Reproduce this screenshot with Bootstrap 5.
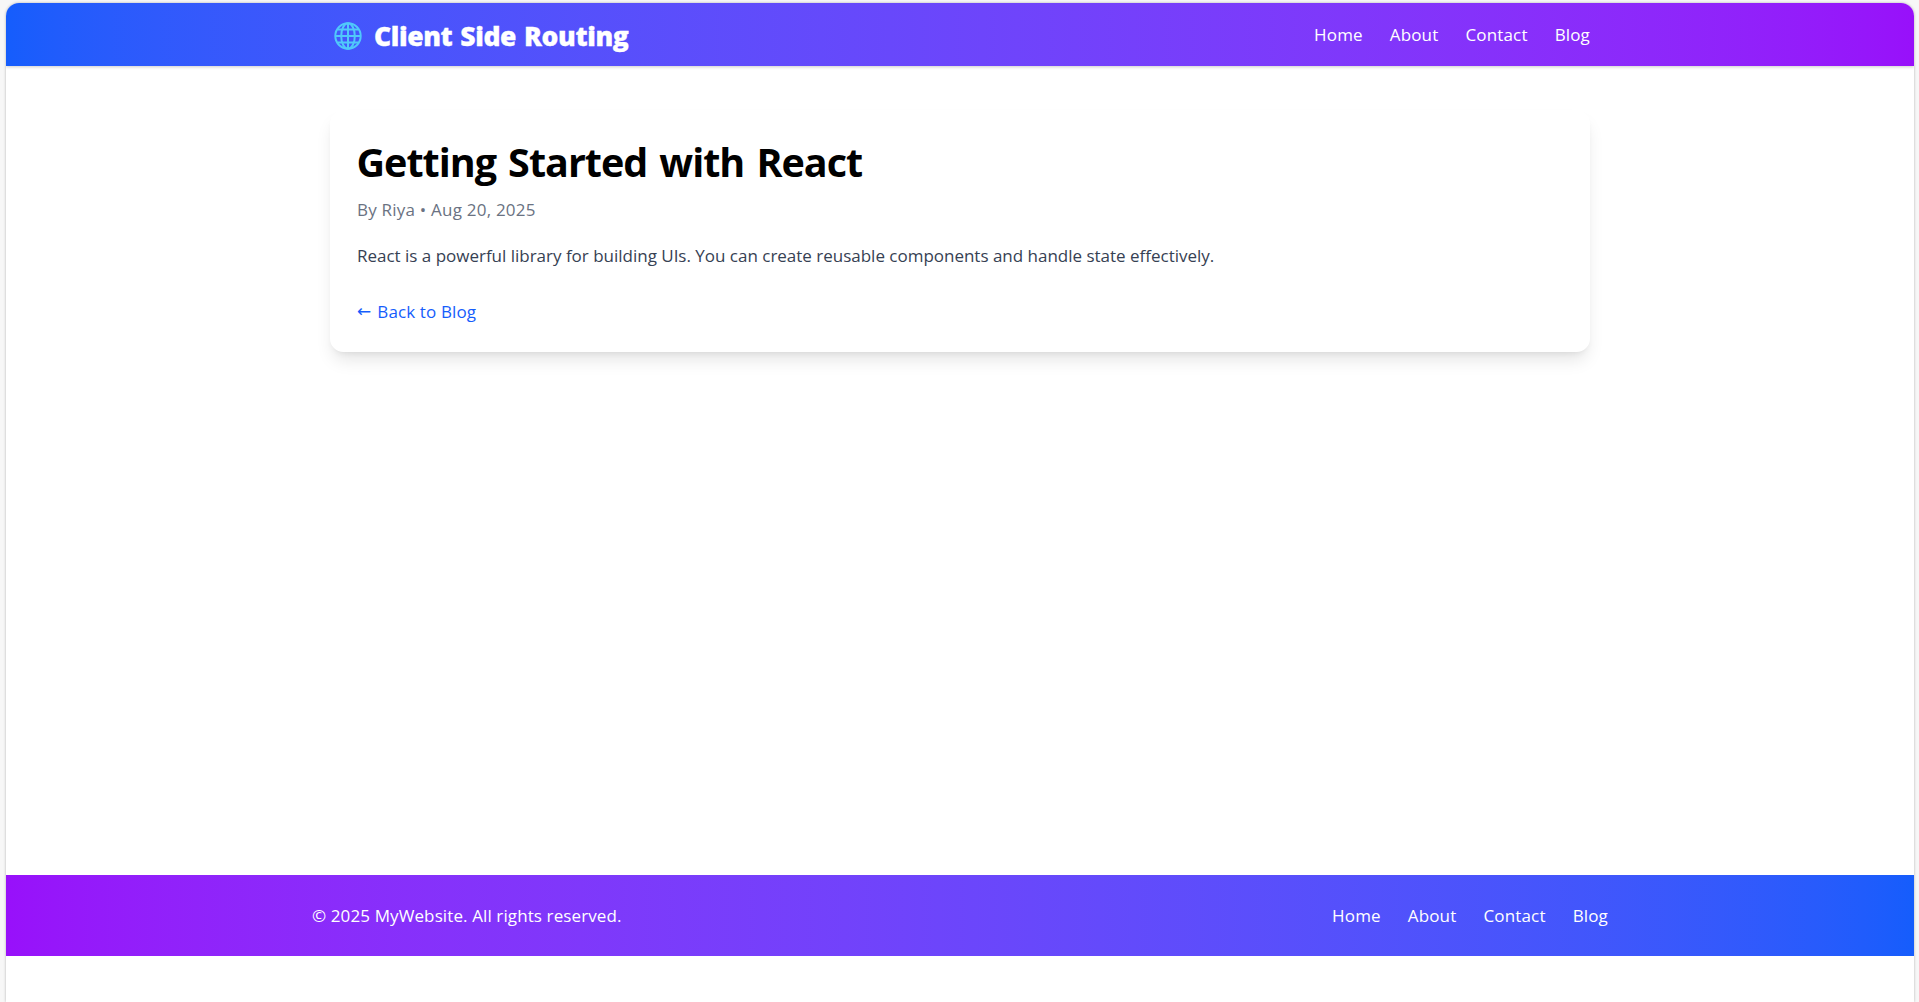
<!DOCTYPE html>
<html lang="en">
<head>
<meta charset="utf-8">
<meta name="viewport" content="width=device-width, initial-scale=1">
<title>Client Side Routing</title>
<link href="https://cdn.jsdelivr.net/npm/bootstrap@5.3.0/dist/css/bootstrap.min.css" rel="stylesheet">
<style>
body{background:#f7f7f7;font:17px/27px "Open Sans","Noto Sans",sans-serif;height:100vh;overflow:hidden;padding:3px 5px 0 6px}
.app-frame{height:999px;background:#fff;border-radius:13px 13px 0 0;box-shadow:0 0 3px rgba(0,0,0,.28);overflow:hidden}
.site-header{height:63px;background:linear-gradient(to right in oklab,#155dfc,#9810fa);box-shadow:0 1px 3px rgba(0,0,0,.2)}
.site-footer{height:81px;background:linear-gradient(to right in oklab,#9810fa,#155dfc);letter-spacing:.11px}
.site-main{height:809px;padding-top:44px}
.inner{width:1260px}
.inner-wide{width:1296px}
.brand{font-size:26.5px;line-height:36px;font-weight:800;letter-spacing:-.4px;word-spacing:1.5px;-webkit-text-stroke:.3px #fff;padding:2px 0 0 4px;gap:12px}
.menu{gap:27px;letter-spacing:.16px}
.post{padding:30px 27px 27px;border-radius:13.5px;background:#fff;box-shadow:0 11px 17px -3px rgba(0,0,0,.1),0 4px 7px -4px rgba(0,0,0,.1)}
.post-title{font-size:39.5px;line-height:45px;letter-spacing:-1px;word-spacing:2.8px;margin:0 0 11px -.5px;color:#000}
.byline{color:#6a7282;letter-spacing:.22px;margin-bottom:19px}
.post-text{color:#364153;letter-spacing:-.01px;margin-bottom:29px}
.back-link{color:#155dfc;letter-spacing:.12px}
.arrow{width:20.3px;font-family:"DejaVu Sans",sans-serif}
</style>
</head>
<body>
<div class="app-frame">
  <header class="site-header position-relative">
    <div class="inner mx-auto h-100 d-flex align-items-center justify-content-between">
      <a href="#" class="brand d-flex align-items-center text-white text-decoration-none">
        <svg width="28" height="28" viewBox="0 0 28 28" fill="none" stroke="#50c8fa" stroke-width="2" aria-hidden="true">
          <circle cx="14" cy="14" r="12.7"/>
          <ellipse cx="14" cy="14" rx="6.8" ry="12.7"/>
          <path d="M14 1.3v25.4M1.3 14h25.4M3.6 7.6h20.8M3.6 20.4h20.8"/>
        </svg>
        <span>Client Side Routing</span>
      </a>
      <nav class="menu d-flex">
        <a href="#" class="text-white text-decoration-none">Home</a>
        <a href="#" class="text-white text-decoration-none">About</a>
        <a href="#" class="text-white text-decoration-none">Contact</a>
        <a href="#" class="text-white text-decoration-none">Blog</a>
      </nav>
    </div>
  </header>
  <main class="site-main">
    <article class="post inner mx-auto">
      <h1 class="post-title fw-bold">Getting Started with React</h1>
      <p class="byline">By Riya • Aug 20, 2025</p>
      <p class="post-text">React is a powerful library for building UIs. You can create reusable components and handle state effectively.</p>
      <a href="#" class="back-link d-flex text-decoration-none"><span class="arrow">←</span><span>Back to Blog</span></a>
    </article>
  </main>
  <footer class="site-footer text-white">
    <div class="inner-wide mx-auto h-100 d-flex align-items-center justify-content-between">
      <span>© 2025 MyWebsite. All rights reserved.</span>
      <nav class="menu d-flex">
        <a href="#" class="text-white text-decoration-none">Home</a>
        <a href="#" class="text-white text-decoration-none">About</a>
        <a href="#" class="text-white text-decoration-none">Contact</a>
        <a href="#" class="text-white text-decoration-none">Blog</a>
      </nav>
    </div>
  </footer>
</div>
<script src="https://cdn.jsdelivr.net/npm/bootstrap@5.3.0/dist/js/bootstrap.bundle.min.js"></script>
</body>
</html>
